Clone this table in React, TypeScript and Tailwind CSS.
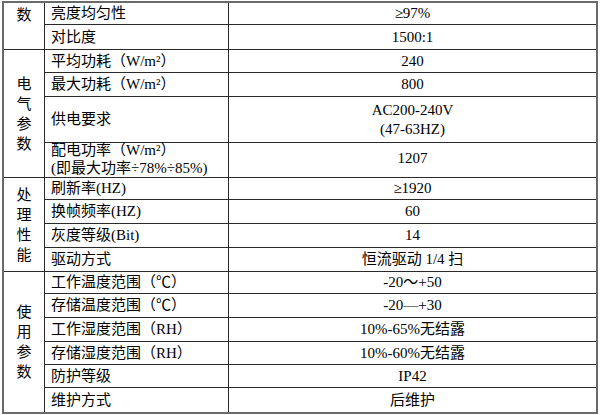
import React from "react";

interface Row {
    name: React.ReactNode;
    value: React.ReactNode;
    h: string;
}

interface Group {
    label: string;
    top?: boolean;
    rows: Row[];
}

const groups: Group[] = [
    {
        label: "数",
        top: true,
        rows: [
            { name: "亮度均匀性", value: "≥97%", h: "h-[22px]" },
            { name: "对比度", value: "1500:1", h: "h-[24px]" },
        ],
    },
    {
        label: "电气参数",
        rows: [
            { name: "平均功耗（W/m²）", value: "240", h: "h-[23px]" },
            { name: "最大功耗（W/m²）", value: "800", h: "h-[24px]" },
            {
                name: "供电要求",
                value: (
                    <div className="leading-[19px] text-center">
                        <div>AC200-240V</div>
                        <div>(47-63HZ)</div>
                    </div>
                ),
                h: "h-[46px]",
            },
            {
                name: (
                    <div className="leading-[18px] -mt-[3px]">
                        <div>配电功率（W/m²）</div>
                        <div>(即最大功率÷78%÷85%)</div>
                    </div>
                ),
                value: <div className="-mt-[3px]">1207</div>,
                h: "h-[34px]",
            },
        ],
    },
    {
        label: "处理性能",
        rows: [
            { name: "刷新率(HZ)", value: "≥1920", h: "h-[22px]" },
            { name: "换帧频率(HZ)", value: "60", h: "h-[24px]" },
            { name: "灰度等级(Bit)", value: "14", h: "h-[24px]" },
            { name: "驱动方式", value: "恒流驱动 1/4 扫", h: "h-[23px]" },
        ],
    },
    {
        label: "使用参数",
        rows: [
            { name: "工作温度范围（℃）", value: "-20～+50", h: "h-[22px]" },
            { name: "存储温度范围（℃）", value: "-20—+30", h: "h-[24px]" },
            { name: "工作湿度范围（RH）", value: "10%-65%无结露", h: "h-[24px]" },
            { name: "存储湿度范围（RH）", value: "10%-60%无结露", h: "h-[23px]" },
            { name: "防护等级", value: "IP42", h: "h-[23px]" },
            { name: "维护方式", value: "后维护", h: "h-[24px]" },
        ],
    },
];

const App = () => {
    return (
        <div className="w-[600px] h-[415px] bg-white pt-[1px] text-[15px] text-black font-['Liberation_Serif','Noto_Sans_CJK_SC',serif]">
            <div className="ml-[2px] w-[596px] border-2 border-[#6a6a6a] divide-y divide-[#2a2a2a]">
                {groups.map((group, gi) => (
                    <div className="flex" key={gi}>
                        <div
                            className={`w-[41px] shrink-0 border-r border-[#2a2a2a] flex flex-col items-center leading-[20px] ${
                                group.top ? "justify-start pt-[2px]" : "justify-center"
                            }`}
                        >
                            {group.label.split("").map((ch, ci) => (
                                <span key={ci}>{ch}</span>
                            ))}
                        </div>
                        <div className="flex-1 flex flex-col divide-y divide-[#2a2a2a]">
                            {group.rows.map((row, ri) => (
                                <div className={`flex ${row.h}`} key={ri}>
                                    <div className="w-[184px] shrink-0 border-r border-[#2a2a2a] flex items-center pl-[6px] whitespace-nowrap">
                                        {row.name}
                                    </div>
                                    <div className="flex-1 flex items-center justify-center whitespace-nowrap">
                                        {row.value}
                                    </div>
                                </div>
                            ))}
                        </div>
                    </div>
                ))}
            </div>
        </div>
    );
};

export default App;
